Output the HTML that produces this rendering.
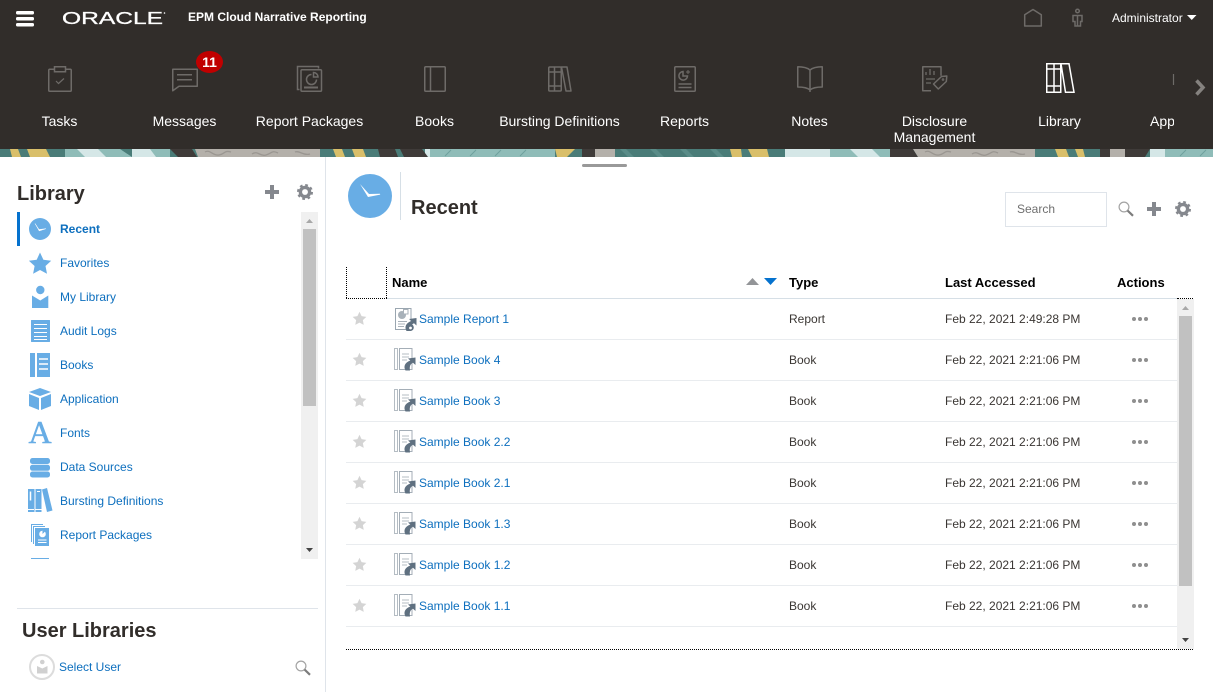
<!DOCTYPE html>
<html lang="en">
<head>
<meta charset="utf-8">
<title>EPM Cloud Narrative Reporting</title>
<style>
html,body{margin:0;padding:0;background:#fff;width:1213px;height:692px;overflow:hidden}
body{position:relative;font-family:"Liberation Sans",Arial,sans-serif;font-size:12px;color:#312d2a}
.a{position:absolute;white-space:nowrap}
svg{position:absolute;overflow:visible}
.hd{left:0;top:0;width:1213px;height:149px;background:#312d2a}
.nl{color:#fff;font-size:14px;line-height:16px;text-align:center;width:125px;top:113px}
.t{font-weight:bold;font-size:20px;line-height:24px;color:#312d2a}
.ln{left:60px;color:#0d6fbe;line-height:14px}
.th{font-weight:bold;font-size:13px;line-height:16px;color:#000;top:275px}
.rl{left:346px;width:831px;height:1px;background:#e9ecef}
.nm{left:419px;color:#0d6fbe;line-height:14px}
.ty{left:789px;line-height:14px;color:#3a3633}
.dt{left:945px;line-height:14px;color:#3a3633}
</style>
</head>
<body>
<svg width="0" height="0" style="position:absolute">
<defs>
<symbol id="gear" viewBox="0 0 18 18"><circle cx="9" cy="9" r="5.200" fill="none" stroke="#85888e" stroke-width="3.800"/><circle cx="9" cy="9" r="7.700" fill="none" stroke="#85888e" stroke-width="2.600" stroke-dasharray="3 3.050"/></symbol>
<symbol id="plus" viewBox="0 0 14 14"><path d="M5 0h4v5h5v4H9v5H5V9H0V5h5z" fill="#85888e"/></symbol>
<symbol id="mag" viewBox="0 0 16 16"><circle cx="6" cy="6" r="4.900" fill="none" stroke="#a4a4a4" stroke-width="1.200"/><path d="M9.500 9.500L15 14.800" stroke="#7c7c7c" stroke-width="2.200"/></symbol>
<symbol id="star" viewBox="0 0 16 16"><path d="M8 .8l2.200 4.700 5.100.7-3.700 3.500.9 5.100L8 12.400l-4.500 2.400.9-5.100L.7 6.200l5.100-.7z" fill="#d4d4d4"/></symbol>
<symbol id="dots" viewBox="0 0 18 4"><circle cx="2" cy="2" r="2" fill="#8f8f8f"/><circle cx="8" cy="2" r="2" fill="#8f8f8f"/><circle cx="14" cy="2" r="2" fill="#8f8f8f"/></symbol>
<symbol id="arrow" viewBox="0 0 13 14"><path d="M5 1.500L12.500 .5V8L10 5.800C7.300 7 6.300 9.500 7 13.500H2.500C.2 9.500 1.800 5.500 7.300 3.500z" fill="#5f7080"/></symbol>
<symbol id="rep" viewBox="0 0 24 24"><rect x="1.500" y=".5" width="15.500" height="21" fill="#fff" stroke="#9aa6b0"/><circle cx="8" cy="7" r="4" fill="#a9b2ba"/><path d="M9.500 1.500h4.500v4.500h-4.500z" fill="#fff" stroke="#a9b2ba"/><path d="M4 13.500h9M4 16h7M4 18.500h6" stroke="#a9b2ba"/><use href="#arrow" x="10" y="9.500" width="13" height="14"/><circle cx="16.300" cy="19.500" r="3.500" fill="#5f7080"/><circle cx="16.500" cy="20" r="1.400" fill="#fff"/></symbol>
<symbol id="bk" viewBox="0 0 24 24"><rect x=".5" y=".5" width="3" height="21" fill="#fff" stroke="#b4bcc3"/><rect x="5.500" y=".5" width="12.500" height="21" fill="#fff" stroke="#a4aeb7"/><path d="M8 6h7M8 9h7M8 12h5" stroke="#b4bcc3"/><use href="#arrow" x="9" y="9" width="13" height="14"/></symbol>
</defs>
</svg>

<div class="a hd"></div>

<!-- pattern band -->
<svg style="left:0;top:149px" width="1213" height="8" viewBox="0 0 1213 8">
<rect width="1213" height="8" fill="#4a7c78"/>
<g fill="#d9bf6a"><path d="M10 0h8l3 8H12zM27 0h19l4 8H30zM333 0h9l3 8H336zM352 0h11l3 8H355zM555 0h20l-8 8H557zM730 0h11l1 8H732zM748 0h19l2 8H752zM1055 0h11l3 8H1058zM1075 0h8l2 8H1078z"/></g>
<g fill="#8fbcb8"><path d="M65 0h105v8H65zM430 0h125v8H430zM830 0h60v8H830zM1165 0h48v8H1165z"/></g>
<g fill="#d5e7e7"><path d="M77 0h21l8 8H85zM132 0h18l6 8H132zM785 0h45v8H785zM850 0h22l8 8H858zM1150 0h15v8H1150zM425 0h5v8h-5z"/></g>
<path d="M120 0h12v8z" fill="#4a7c78"/>
<g fill="#3f3b39"><path d="M170 0h22l5 8H178zM378 0h17l3 8H380zM582 0h13v8H582zM890 0h23l5 8H890zM1100 0h10v8H1100zM1125 0h25l-5 8H1125zM400 0h22l6 8H404z"/></g>
<g fill="#b4b0aa"><path d="M195 0h125v8H198zM595 0h20v8H595zM913 0h122v8H918zM1110 0h15v8H1110z"/></g>
<g fill="none" stroke="#9a9691" stroke-width="1.300"><path d="M205 3c5-3 8 4 14 3s5-5 12-3M252 5c6-4 8 3 14 1s6-5 12-2M295 3c4-2 8 4 15 2M925 3c5-3 8 4 14 3s5-5 12-3M972 5c6-4 8 3 14 1s6-5 12-2M1010 3c4-2 8 4 15 2"/></g>
<g fill="#5a8c88"><path d="M620 0h6l8 8h-6zM650 0h6l8 8h-6zM680 0h6l8 8h-6zM710 0h6l8 8h-6z"/></g>
<g stroke="#6fa19d" stroke-width="1"><path d="M445 7l6-6M470 7l6-6M495 7l6-6M520 7l6-6M1180 7l6-6M1200 7l6-6"/></g>
</svg>

<!-- hamburger -->
<svg style="left:0;top:0" width="60" height="40"><g fill="#fff"><rect x="16" y="11" width="18" height="3.500" rx="1.500"/><rect x="16" y="17" width="18" height="3.500" rx="1.500"/><rect x="16" y="23" width="18" height="3.500" rx="1.500"/></g></svg>

<!-- Oracle wordmark -->
<svg style="left:62px;top:8px" width="108" height="20"><text x="0" y="16" font-family="Liberation Sans" font-size="17.500" fill="#fff" stroke="#fff" stroke-width=".3" textLength="101" lengthAdjust="spacingAndGlyphs">ORACLE</text><circle cx="102.500" cy="5" r="0.800" fill="#fff"/></svg>
<div class="a" style="left:188px;top:10px;color:#fff;font-weight:bold;line-height:14px">EPM Cloud Narrative Reporting</div>

<!-- top right -->
<svg style="left:1020px;top:5px" width="180" height="26" fill="none" stroke="#6e6b68" stroke-width="1.500">
<path d="M4.700 21V9.800L13 4.500l8.300 5.300V21z" stroke-linejoin="round"/>
<circle cx="57.500" cy="6" r="1.800"/><path d="M53 10.500h9l0 6h-1.500V21h-5.500v-4.500H53zM57.500 11v10" />
<path d="M167 10h9.500l-4.750 5z" fill="#fff" stroke="none"/>
</svg>
<div class="a" style="left:1112px;top:11px;color:#fff;line-height:14px">Administrator</div>

<!-- nav icons -->
<svg style="left:0;top:0" width="1213" height="149" fill="none" stroke="#6e6b68" stroke-width="1.500">
<!-- tasks -->
<rect x="48.750" y="69.250" width="22.500" height="22" rx="1"/><rect x="54.500" y="66.750" width="11" height="5" fill="#312d2a"/><path d="M56 81l2.500 2.500L64 78.500" stroke-width="1.200"/>
<!-- messages -->
<path d="M172.750 69.250h24.500v17H179l-6.250 4.500z" stroke-linejoin="round"/><path d="M177 74.750h15M177 79.750h15"/>
<!-- packages -->
<path d="M299.500 89.500h-2V66.500h21v2"/><rect x="301" y="69.750" width="20.500" height="21.500" rx="1" fill="#312d2a"/><path d="M311.500 74.500a5 5 0 1 0 5 5"/><path d="M313.500 72.500a4.500 4.500 0 0 1 4.500 4.500h-4.500z"/><path d="M304 87.500h14" stroke-width="2"/>
<!-- books -->
<rect x="424.750" y="66.750" width="20.500" height="24.500" rx="1"/><path d="M430.500 66.750v24.500"/>
<!-- bursting -->
<rect x="548.750" y="67" width="12.500" height="24" rx="1"/><path d="M554.500 67v24M548.750 72h12.500M548.750 86h12.500"/><path d="M561.500 67h5.500l4 24h-5z" stroke-linejoin="round"/>
<!-- reports -->
<rect x="674.750" y="66.750" width="20.500" height="24.500" rx="1"/><path d="M683 71.500a4.300 4.300 0 1 0 4.500 4.500h-4.500z"/><path d="M688 70v4M686 72h4" stroke-width="1"/><path d="M678.500 84h13M678.500 87.500h13" stroke-width="1.500"/>
<!-- notes -->
<path d="M810 70c-3-2.500-8-3.200-12.250-3.200V87c5 0 9.500.5 12.250 3 2.750-2.500 7.250-3 12.250-3V66.800C818 66.800 813 67.500 810 70zM810 70v22" stroke-linejoin="round"/>
<!-- disclosure -->
<path d="M931 90.750h-8.250V66.750H941v9" stroke-linejoin="round"/><path d="M926 75v-3M930 75v-6M934 75v-4M926 79h9M926 83h5" stroke-width="1.300"/><path d="M933.500 84l8-7.500 5.300-.5-.5 5.500-8 7.500z" stroke-linejoin="round"/><circle cx="943" cy="79.500" r=".8" stroke-width="1"/>
<!-- library -->
<g stroke="#fff"><rect x="1046.750" y="63.750" width="14" height="28.500"/><path d="M1054 63.750v28.500M1046.750 69h14M1046.750 86h14"/><path d="M1061 63.750h8l5 28.500h-8.500z"/></g>
<!-- app icon clip -->
<path d="M1173.500 74v11" stroke-width="1.200"/>
<!-- chevron -->
<path d="M1196.500 80.500l6.500 7-6.500 7" stroke="#85827f" stroke-width="3.500"/>
</svg>

<!-- badge -->
<div class="a" style="left:196px;top:51px;width:27px;height:22px;border-radius:50%;background:#c00000;color:#fff;font-weight:bold;font-size:14px;line-height:22px;text-align:center">11</div>

<!-- nav labels -->
<div class="a nl" style="left:-3px">Tasks</div>
<div class="a nl" style="left:122px">Messages</div>
<div class="a nl" style="left:247px">Report Packages</div>
<div class="a nl" style="left:372px">Books</div>
<div class="a nl" style="left:497px">Bursting Definitions</div>
<div class="a nl" style="left:622px">Reports</div>
<div class="a nl" style="left:747px">Notes</div>
<div class="a nl" style="left:872px;white-space:normal">Disclosure<br>Management</div>
<div class="a nl" style="left:997px">Library</div>
<div class="a" style="left:1150px;top:113px;width:24px;overflow:hidden;color:#fff;font-size:14px;line-height:16px">Application</div>

<!-- splitter handle -->
<div class="a" style="left:582px;top:164px;width:45px;height:3px;border-radius:2px;background:#999"></div>

<!-- left panel -->
<div class="a" style="left:325px;top:157px;width:1px;height:535px;background:#dfe4ea"></div>
<div class="a t" style="left:17px;top:182px">Library</div>
<svg style="left:265px;top:185px" width="14" height="14"><use href="#plus" width="14" height="14"/></svg>
<svg style="left:297px;top:184px" width="16" height="16"><use href="#gear" width="16" height="16"/></svg>

<div class="a" style="left:17px;top:212px;width:3px;height:34px;background:#0572ce"></div>
<div class="a ln" style="top:222px;font-weight:bold">Recent</div>
<div class="a ln" style="top:256px">Favorites</div>
<div class="a ln" style="top:290px">My Library</div>
<div class="a ln" style="top:324px">Audit Logs</div>
<div class="a ln" style="top:358px">Books</div>
<div class="a ln" style="top:392px">Application</div>
<div class="a ln" style="top:426px">Fonts</div>
<div class="a ln" style="top:460px">Data Sources</div>
<div class="a ln" style="top:494px">Bursting Definitions</div>
<div class="a ln" style="top:528px">Report Packages</div>

<svg style="left:0;top:200px" width="60" height="360" fill="#68ade5">
<!-- clock -->
<circle cx="40" cy="29" r="11"/><path d="M35 23.500l4 6 7-.8-6.800 2.200z" fill="#fff" stroke="#fff" stroke-width=".5"/>
<!-- star -->
<path d="M40 52.500l3.400 7.300 7.800 .9-5.700 5.300 1.500 7.700L40 70l-6.900 3.700 1.500-7.700-5.700-5.300 7.800-.9z"/>
<!-- my library -->
<circle cx="40.300" cy="90" r="4.200"/><path d="M32 95.500l8.300 5 8-5V108H32z"/>
<!-- audit logs -->
<rect x="31" y="120" width="19" height="22" rx=".5"/><path d="M34 124.500h13M34 128.500h13M34 132.500h13M34 136.500h13M34 139.500h13" stroke="#fff" stroke-width="1"/>
<!-- books -->
<rect x="30" y="153" width="5" height="24"/><rect x="37" y="153" width="13" height="24"/><path d="M39 159h9M39 164h9M39 169h9" stroke="#fff" stroke-width="1.500"/>
<!-- application -->
<path d="M40 188l11 4-11 4-11-4z"/><path d="M29 194l10 4v12l-10-4zM51 194l-10 4v12l10-4z"/>
<!-- data sources -->
<rect x="30" y="258" width="20" height="6" rx="2.500"/><rect x="30" y="264.800" width="20" height="6" rx="2.500"/><rect x="30" y="271.500" width="20" height="6" rx="2.500"/>
<!-- bursting -->
<rect x="28" y="289" width="6.500" height="23"/><rect x="35.500" y="289" width="6" height="23"/><path d="M42 289.500l5-1.500 5.500 22.500-5.500 1.500z"/><path d="M30.500 291.500v9" stroke="#fff" stroke-width="1.500"/><path d="M28 309.500h6M35.500 309.500h6M37 291.500h3" stroke="#fff" stroke-width="1"/>
<!-- report packages -->
<path d="M31 324h12v1H32v17h-1z"/><path d="M33 326h12v1H34v17h-1z"/><rect x="35" y="328" width="14" height="18"/><circle cx="42.500" cy="334" r="3.300" fill="#fff"/><path d="M42.500 334v-3.300h3.300z" fill="#68ade5"/><path d="M38 340h8.500M38 342.500h8.500" stroke="#fff" stroke-width="1"/>
<!-- cut off -->
<rect x="31" y="358" width="18" height="1"/>
</svg>
<div class="a" style="left:28px;top:416px;width:24px;text-align:center;font-family:'Liberation Serif',serif;font-size:32px;line-height:32px;color:#68ade5;-webkit-text-stroke:.5px #68ade5">A</div>

<!-- left scrollbar -->
<div class="a" style="left:301px;top:212px;width:17px;height:347px;background:#f0f0f0"></div>
<div class="a" style="left:303px;top:229px;width:13px;height:177px;background:#c1c1c1"></div>
<svg style="left:301px;top:212px" width="17" height="347"><path d="M5 11l3.500-4 3.500 4z" fill="#a8a8a8"/><path d="M5 336h7l-3.500 4z" fill="#444"/></svg>

<!-- user libraries -->
<div class="a" style="left:17px;top:608px;width:301px;height:1px;background:#dfe4ea"></div>
<div class="a t" style="left:22px;top:619px">User Libraries</div>
<svg style="left:29px;top:654px" width="26" height="26"><circle cx="13" cy="13" r="12" fill="#fff" stroke="#dcdcdc" stroke-width="2"/><circle cx="13.300" cy="8" r="2.300" fill="#d0d0d0"/><path d="M8 12l5.300 2.500L18.500 12v7.500H8z" fill="#d0d0d0"/></svg>
<div class="a" style="left:59px;top:660px;color:#0d6fbe;line-height:14px">Select User</div>
<svg style="left:295px;top:660px" width="16" height="16"><use href="#mag" width="16" height="16"/></svg>

<!-- main header -->
<svg style="left:348px;top:174px" width="44" height="44"><circle cx="22" cy="22" r="22" fill="#68ade5"/><path d="M12 10l9 10 11-.2.200 .8L20 23z" fill="#fff"/></svg>
<div class="a" style="left:400px;top:172px;width:1px;height:48px;background:#d6dfe6"></div>
<div class="a t" style="left:411px;top:196px">Recent</div>

<div class="a" style="left:1005px;top:192px;width:100px;height:33px;border:1px solid #dfe4ea"></div>
<div class="a" style="left:1017px;top:202px;color:#6f6f6f;line-height:14px">Search</div>
<svg style="left:1118px;top:201px" width="16" height="16"><use href="#mag" width="16" height="16"/></svg>
<svg style="left:1147px;top:202px" width="14" height="14"><use href="#plus" width="14" height="14"/></svg>
<svg style="left:1175px;top:201px" width="16" height="16"><use href="#gear" width="16" height="16"/></svg>

<!-- table header -->
<div class="a" style="left:346px;top:267px;height:31px;border-left:1px dotted #000"></div>
<div class="a" style="left:386px;top:267px;height:31px;border-left:1px dotted #000"></div>
<div class="a" style="left:346px;top:298px;width:41px;border-top:1px dotted #000"></div>
<div class="a" style="left:387px;top:298px;width:790px;height:1px;background:#d6dfe6"></div>
<div class="a" style="left:1177px;top:298px;width:16px;border-top:1px dotted #000"></div>
<div class="a th" style="left:392px">Name</div>
<div class="a th" style="left:789px">Type</div>
<div class="a th" style="left:945px">Last Accessed</div>
<div class="a th" style="left:1117px">Actions</div>
<svg style="left:746px;top:278px" width="32" height="8"><path d="M0 7L6.500 0 13 7z" fill="#939598"/><path d="M18 0h13l-6.500 7z" fill="#0572ce"/></svg>

<!-- rows -->
<svg style="left:352px;top:311px" width="15" height="15"><use href="#star" width="15" height="15"/></svg>
<svg style="left:394px;top:308px" width="24" height="24"><use href="#rep" width="24" height="24"/></svg>
<div class="a nm" style="top:312px">Sample Report 1</div><div class="a ty" style="top:312px">Report</div><div class="a dt" style="top:312px">Feb 22, 2021 2:49:28 PM</div>
<svg style="left:1132px;top:317px" width="18" height="4"><use href="#dots" width="18" height="4"/></svg>
<div class="a rl" style="top:339px"></div>

<svg style="left:352px;top:352px" width="15" height="15"><use href="#star" width="15" height="15"/></svg>
<svg style="left:394px;top:348px" width="24" height="24"><use href="#bk" width="24" height="24"/></svg>
<div class="a nm" style="top:353px">Sample Book 4</div><div class="a ty" style="top:353px">Book</div><div class="a dt" style="top:353px">Feb 22, 2021 2:21:06 PM</div>
<svg style="left:1132px;top:358px" width="18" height="4"><use href="#dots" width="18" height="4"/></svg>
<div class="a rl" style="top:380px"></div>

<svg style="left:352px;top:393px" width="15" height="15"><use href="#star" width="15" height="15"/></svg>
<svg style="left:394px;top:389px" width="24" height="24"><use href="#bk" width="24" height="24"/></svg>
<div class="a nm" style="top:394px">Sample Book 3</div><div class="a ty" style="top:394px">Book</div><div class="a dt" style="top:394px">Feb 22, 2021 2:21:06 PM</div>
<svg style="left:1132px;top:399px" width="18" height="4"><use href="#dots" width="18" height="4"/></svg>
<div class="a rl" style="top:421px"></div>

<svg style="left:352px;top:434px" width="15" height="15"><use href="#star" width="15" height="15"/></svg>
<svg style="left:394px;top:430px" width="24" height="24"><use href="#bk" width="24" height="24"/></svg>
<div class="a nm" style="top:435px">Sample Book 2.2</div><div class="a ty" style="top:435px">Book</div><div class="a dt" style="top:435px">Feb 22, 2021 2:21:06 PM</div>
<svg style="left:1132px;top:440px" width="18" height="4"><use href="#dots" width="18" height="4"/></svg>
<div class="a rl" style="top:462px"></div>

<svg style="left:352px;top:475px" width="15" height="15"><use href="#star" width="15" height="15"/></svg>
<svg style="left:394px;top:471px" width="24" height="24"><use href="#bk" width="24" height="24"/></svg>
<div class="a nm" style="top:476px">Sample Book 2.1</div><div class="a ty" style="top:476px">Book</div><div class="a dt" style="top:476px">Feb 22, 2021 2:21:06 PM</div>
<svg style="left:1132px;top:481px" width="18" height="4"><use href="#dots" width="18" height="4"/></svg>
<div class="a rl" style="top:503px"></div>

<svg style="left:352px;top:516px" width="15" height="15"><use href="#star" width="15" height="15"/></svg>
<svg style="left:394px;top:512px" width="24" height="24"><use href="#bk" width="24" height="24"/></svg>
<div class="a nm" style="top:517px">Sample Book 1.3</div><div class="a ty" style="top:517px">Book</div><div class="a dt" style="top:517px">Feb 22, 2021 2:21:06 PM</div>
<svg style="left:1132px;top:522px" width="18" height="4"><use href="#dots" width="18" height="4"/></svg>
<div class="a rl" style="top:544px"></div>

<svg style="left:352px;top:557px" width="15" height="15"><use href="#star" width="15" height="15"/></svg>
<svg style="left:394px;top:553px" width="24" height="24"><use href="#bk" width="24" height="24"/></svg>
<div class="a nm" style="top:558px">Sample Book 1.2</div><div class="a ty" style="top:558px">Book</div><div class="a dt" style="top:558px">Feb 22, 2021 2:21:06 PM</div>
<svg style="left:1132px;top:563px" width="18" height="4"><use href="#dots" width="18" height="4"/></svg>
<div class="a rl" style="top:585px"></div>

<svg style="left:352px;top:598px" width="15" height="15"><use href="#star" width="15" height="15"/></svg>
<svg style="left:394px;top:594px" width="24" height="24"><use href="#bk" width="24" height="24"/></svg>
<div class="a nm" style="top:599px">Sample Book 1.1</div><div class="a ty" style="top:599px">Book</div><div class="a dt" style="top:599px">Feb 22, 2021 2:21:06 PM</div>
<svg style="left:1132px;top:604px" width="18" height="4"><use href="#dots" width="18" height="4"/></svg>
<div class="a rl" style="top:626px"></div>

<!-- table scrollbar -->
<div class="a" style="left:1177px;top:299px;width:17px;height:350px;background:#f0f0f0"></div>
<div class="a" style="left:1179px;top:316px;width:13px;height:270px;background:#c1c1c1"></div>
<svg style="left:1177px;top:299px" width="17" height="350"><path d="M5 11l3.500-4 3.500 4z" fill="#a8a8a8"/><path d="M5 339h7l-3.500 4z" fill="#444"/></svg>
<div class="a" style="left:346px;top:649px;width:847px;border-top:1px dotted #000"></div>
</body>
</html>
